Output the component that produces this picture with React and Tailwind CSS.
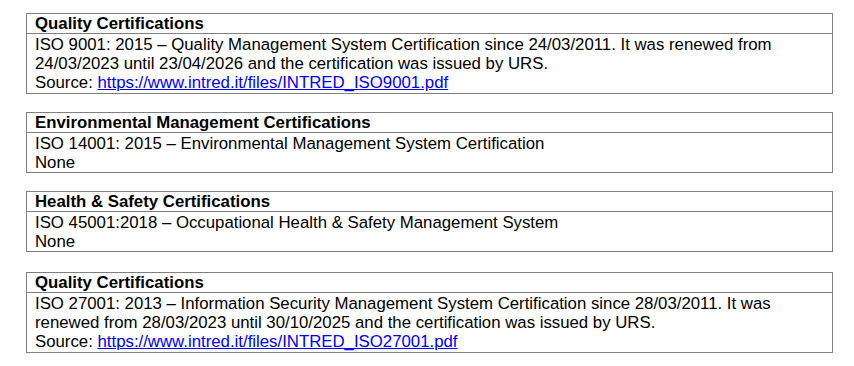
import React from 'react';

const sections = [
  {
    title: 'Quality Certifications',
    lines: [
      'ISO 9001: 2015 – Quality Management System Certification since 24/03/2011. It was renewed from',
      '24/03/2023 until 23/04/2026 and the certification was issued by URS.',
    ],
    link: 'https://www.intred.it/files/INTRED_ISO9001.pdf',
  },
  {
    title: 'Environmental Management Certifications',
    lines: ['ISO 14001: 2015 – Environmental Management System Certification', 'None'],
  },
  {
    title: 'Health & Safety Certifications',
    lines: ['ISO 45001:2018 – Occupational Health & Safety Management System', 'None'],
  },
  {
    title: 'Quality Certifications',
    lines: [
      'ISO 27001: 2013 – Information Security Management System Certification since 28/03/2011. It was',
      'renewed from 28/03/2023 until 30/10/2025 and the certification was issued by URS.',
    ],
    link: 'https://www.intred.it/files/INTRED_ISO27001.pdf',
    extraTop: true,
  },
];

const CertBox = ({ title, lines, link, extraTop }) => (
  <div className={`border border-[#808080] ${extraTop ? 'mt-[2px]' : ''}`}>
    <div className="px-[8px] h-[20px] leading-[20px] font-bold border-b border-[#808080]">{title}</div>
    <div className="px-[8px] pt-[1px]">
      {lines.map((l, i) => (
        <div key={i} className="whitespace-nowrap">{l}</div>
      ))}
      {link && (
        <div className="pb-[1px]">
          Source: <a href={link} className="text-[#0000ff] underline">{link}</a>
        </div>
      )}
    </div>
  </div>
);

export default function App() {
  return (
    <div className="w-[854px] h-[366px] bg-white pt-[13px] pl-[26px] text-black text-[16.8px] leading-[19px] font-['Liberation_Sans',Arial,sans-serif]">
      <div className="w-[807px] flex flex-col gap-[18px]">
        {sections.map((s, i) => (
          <CertBox key={i} {...s} />
        ))}
      </div>
    </div>
  );
}
